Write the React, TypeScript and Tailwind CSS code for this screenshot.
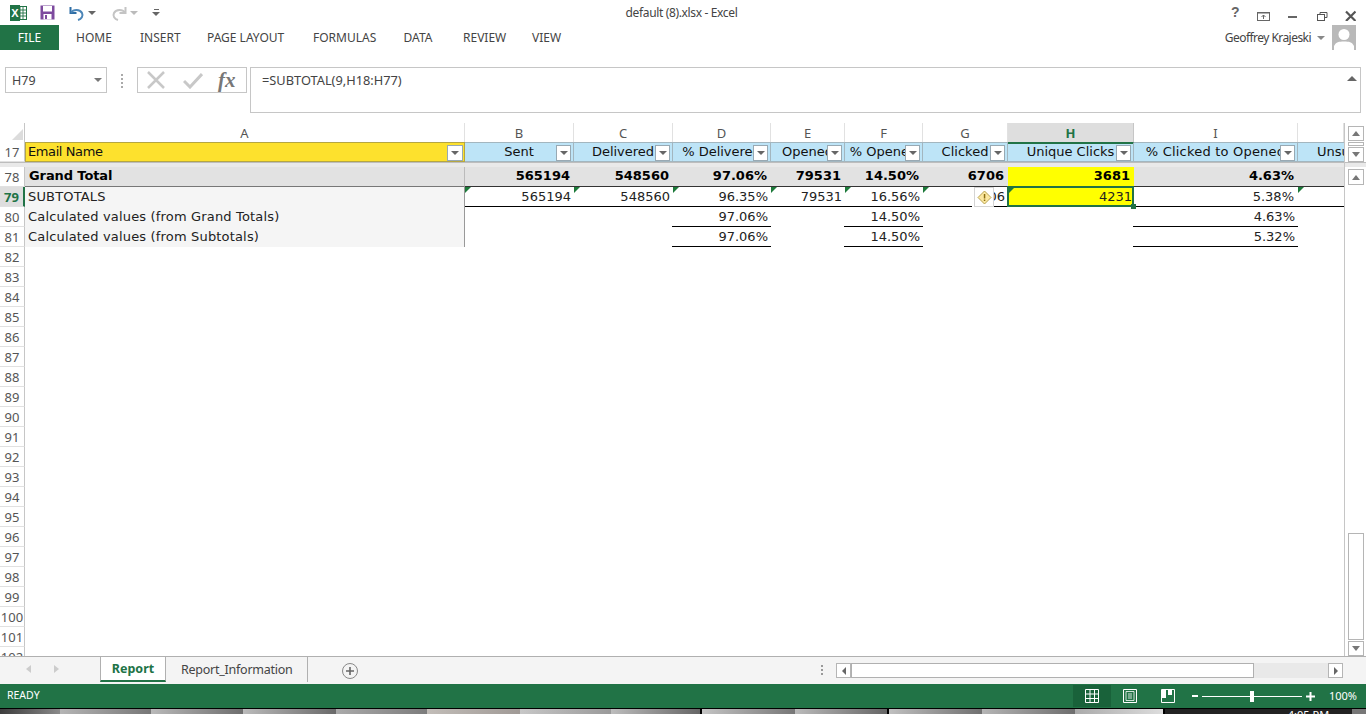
import { ReactNode } from "react";

const cols = "grid grid-cols-[25px_440px_109px_99px_98px_74px_78px_85px_126px_164px_46px]";
const ui = "font-['Noto_Sans',sans-serif]";
const cell = "font-['DejaVu_Sans',sans-serif] text-[13px]";

function Caret({ className = "" }: { className?: string }) {
  return <span className={`block w-0 h-0 border-x-[4px] border-x-transparent border-t-[4px] border-t-[#666] ${className}`} />;
}

function FilterButton() {
  return (
    <span className="absolute right-[2px] top-[2px] w-[15px] h-[16px] bg-white border border-[#98a9b3] flex items-center justify-center">
      <Caret />
    </span>
  );
}

function ScrollButton({ up, className = "" }: { up?: boolean; className?: string }) {
  return (
    <span className={`w-[16px] h-[15px] bg-white border border-[#b5b5b5] flex items-center justify-center shrink-0 ${className}`}>
      <span className={`block w-0 h-0 border-x-[4px] border-x-transparent ${up ? "border-b-[5px] border-b-[#777]" : "border-t-[5px] border-t-[#777]"}`} />
    </span>
  );
}

function Tri() {
  return <span className="absolute left-0 top-0 w-0 h-0 border-t-[6px] border-t-[#1d7a3a] border-r-[6px] border-r-transparent" />;
}

function RowHead({ n, active }: { n: number; active?: boolean }) {
  return (
    <div className={`h-[20px] pt-[2px] ${ui} text-[13px] flex items-center justify-center overflow-hidden border-b border-[#e1e1e1] border-r ${active ? "bg-[#dedede] text-[#217346] font-bold border-r-2 border-r-[#217346]" : "border-r-[#c6c6c6] text-[#555]"}`}>
      {n}
    </div>
  );
}

function ColHead({ label, active }: { label: string; active?: boolean }) {
  return (
    <div className={`${ui} text-[13px] h-[19px] pt-[2px] flex items-center justify-center border-r ${active ? "bg-[#dedede] text-[#217346] font-bold border-r-[#c6c6c6]" : "text-[#555] border-r-[#e1e1e1]"}`}>
      {label}
    </div>
  );
}

function HeadCell({ label, extra = "" }: { label: string; extra?: string }) {
  return (
    <div className={`relative h-[20px] bg-[#bde4f7] border-y border-r border-[#a3b6bf] ${cell} text-[#111] text-center leading-[17px] overflow-hidden whitespace-nowrap ${extra}`}>
      <span className="absolute left-1/2 -translate-x-1/2 top-0">{label}</span>
      <FilterButton />
    </div>
  );
}

function Num({ children, tri, line, className = "" }: { children?: ReactNode; tri?: boolean; line?: boolean; className?: string }) {
  return (
    <div className={`relative h-[20px] pr-[3px] text-right ${cell} text-[#222] leading-[19px] border-b ${line ? "border-b-black" : "border-b-transparent"} ${className}`}>
      {tri && <Tri />}
      {children}
    </div>
  );
}

function WarnBadge() {
  return (
    <span className="absolute left-[49px] top-0 w-[22px] h-[20px] bg-white flex justify-end">
      <span className="w-[20px] h-[20px] bg-white border border-[#d4d4d4] flex items-center justify-center">
        <svg width="15" height="15" viewBox="0 0 15 15">
          <path d="M7.5 1 14 7.5 7.5 14 1 7.5Z" fill="#fbe7a0" stroke="#b8a24e" />
          <rect x="6.8" y="4" width="1.5" height="4.5" fill="#8a6d10" />
          <rect x="6.8" y="9.5" width="1.5" height="1.5" fill="#8a6d10" />
        </svg>
      </span>
    </span>
  );
}

function TitleBar() {
  return (
    <div className={`h-[25px] flex items-center ${ui} text-[12px] text-[#444] shrink-0`}>
      <div className="w-[10px]" />
      <svg width="17" height="16" viewBox="0 0 17 16">
        <rect x="6" y="1.5" width="10.5" height="13" fill="#fff" stroke="#217346" />
        <path d="M10 2v12M13 2v12M7 5h9M7 8h9M7 11h9" stroke="#217346" strokeWidth="0.9" />
        <rect x="0" y="0" width="10" height="16" fill="#217346" />
        <text x="5" y="12" textAnchor="middle" fontSize="11" fontWeight="bold" fill="#fff" fontFamily="Liberation Sans">X</text>
      </svg>
      <svg className="ml-[13px]" width="15" height="15" viewBox="0 0 15 15">
        <rect x="0.5" y="0.5" width="14" height="14" fill="#7d4a9e" />
        <rect x="3" y="1" width="9" height="5.5" fill="#fff" />
        <rect x="3.5" y="9" width="8" height="5.5" fill="#fff" />
        <rect x="5" y="10" width="2" height="4" fill="#7d4a9e" />
      </svg>
      <svg className="ml-[14px]" width="16" height="16" viewBox="0 0 16 16">
        <path d="M1.5 2v6h6" fill="none" stroke="#2f6ea5" strokeWidth="2" />
        <path d="M2 7.500C4.500 4 11 4 13 8c1.500 3-.5 6-4 7" fill="none" stroke="#4c86b8" strokeWidth="2" />
      </svg>
      <Caret className="ml-[3px] border-t-[3px] border-x-[3px]" />
      <svg className="ml-[15px]" width="16" height="16" viewBox="0 0 16 16">
        <path d="M14.500 2v6h-6" fill="none" stroke="#c4c4c4" strokeWidth="2" />
        <path d="M14 7.500C11.500 4 5 4 3 8c-1.500 3 .5 6 4 7" fill="none" stroke="#c4c4c4" strokeWidth="2" />
      </svg>
      <Caret className="ml-[3px] border-t-[3px] border-x-[3px] border-t-[#bbb]" />
      <span className="ml-[14px] flex flex-col items-center gap-[2px]">
        <span className="block w-[5px] h-[1px] bg-[#666]" />
        <Caret className="border-t-[3px] border-x-[3px]" />
      </span>
      <div className="flex-1 text-center pr-[17px] tracking-[-0.35px]">default (8).xlsx - Excel</div>
      <svg width="136" height="16" viewBox="0 0 136 16" className="mr-[10px]">
        <text x="11" y="12" fontSize="14" fontWeight="bold" fill="#666" fontFamily="Liberation Sans">?</text>
        <rect x="37.500" y="7.500" width="12" height="8" fill="none" stroke="#666" />
        <path d="M37 8h13M43.500 14V10M41.500 12l2-2 2 2" stroke="#666" fill="none" />
        <rect x="68" y="11" width="9" height="2" fill="#666" />
        <rect x="97.500" y="9.500" width="7" height="6" fill="none" stroke="#555" />
        <path d="M100 9V7.500h7v5h-2" fill="none" stroke="#555" />
        <path d="M126 6.500l9.500 9.500M135.500 6.500 126 16" stroke="#555" strokeWidth="2.200" />
      </svg>
    </div>
  );
}

function RibbonTabs() {
  const tabs = [
    ["HOME", "w-[35px] ml-[17px]"],
    ["INSERT", "w-[38px] ml-[29px]"],
    ["PAGE LAYOUT", "w-[77px] ml-[29px]"],
    ["FORMULAS", "w-[61px] ml-[29px]"],
    ["DATA", "w-[30px] ml-[29px]"],
    ["REVIEW", "w-[39px] ml-[30px]"],
    ["VIEW", "w-[27px] ml-[30px]"],
  ];
  return (
    <div className={`h-[25px] flex items-center ${ui} text-[12px] text-[#444] shrink-0`}>
      <div className="w-[59px] h-[25px] bg-[#217346] text-white flex items-center justify-center">FILE</div>
      {tabs.map(([t, m]) => (
        <span key={t} className={`${m} text-center whitespace-nowrap`}>{t}</span>
      ))}
      <div className="flex-1" />
      <span className="text-[#444] tracking-[-0.55px]">Geoffrey Krajeski</span>
      <Caret className="ml-[6px] mr-[7px] border-t-[3px] border-x-[3px] border-t-[#888]" />
      <svg width="24" height="25" viewBox="0 0 24 25" className="mr-[10px]">
        <rect width="24" height="25" fill="#b9b9b9" />
        <circle cx="12" cy="9.500" r="5.500" fill="#fff" />
        <path d="M2 25v-4c2-4 5-4.500 10-4.500S20 17 22 21v4Z" fill="#fff" />
      </svg>
    </div>
  );
}

function FormulaBar() {
  return (
    <div className={`h-[73px] shrink-0 flex items-start pt-[17px] pl-[5px] pr-[5px] ${ui} text-[12.800px] text-[#444]`}>
      <div className="w-[102px] h-[26px] border border-[#c6c6c6] flex items-center pl-[6px] pr-[4px] justify-between pt-[2px]">
        <span className="text-[12.500px]">H79</span>
        <Caret className="border-t-[#777] -mt-[2px]" />
      </div>
      <div className="w-[30px] flex flex-col items-center gap-[2px] pt-[7px]">
        <span className="w-[2px] h-[2px] bg-[#aaa]" />
        <span className="w-[2px] h-[2px] bg-[#aaa]" />
        <span className="w-[2px] h-[2px] bg-[#aaa]" />
        <span className="w-[2px] h-[2px] bg-[#aaa]" />
      </div>
      <div className="w-[110px] h-[26px] border border-[#c6c6c6] flex items-center">
        <svg width="20" height="18" viewBox="0 0 20 18" className="ml-[8px]">
          <path d="M2 1l16 16M18 1 2 17" stroke="#c8c8c8" strokeWidth="2.500" />
        </svg>
        <svg width="20" height="18" viewBox="0 0 20 18" className="ml-[17px]">
          <path d="M1 10l6 6L19 3" fill="none" stroke="#c8c8c8" strokeWidth="3" />
        </svg>
        <span className="ml-[15px] font-['Liberation_Serif',serif] italic font-bold text-[21px] leading-none text-[#777]">fx</span>
      </div>
      <div className="ml-[3px] flex-1 h-[46px] border border-[#c6c6c6] relative pl-[11px] pt-[3px]">
        =SUBTOTAL(9,H18:H77)
        <span className="absolute right-[3px] top-[8px] block w-0 h-0 border-x-[5px] border-x-transparent border-b-[5px] border-b-[#666]" />
      </div>
    </div>
  );
}

function Sheet() {
  const rest = Array.from({ length: 20 }, (_, i) => 82 + i);
  const labelCell = `h-[20px] bg-[#f5f5f5] border-r border-[#999] pl-[3px] ${cell} text-[#222] leading-[19px] tracking-[0.17px]`;
  const boldCell = `h-[20px] border-b border-b-[#333] pr-[4px] text-right ${cell} font-bold text-black leading-[18px]`;
  return (
    <div className="flex-1 flex min-h-0">
      <div className="w-[1344px] flex flex-col">
        <div className={cols}>
          <div className="h-[19px] border-r border-[#c6c6c6] relative">
            <span className="absolute right-[1px] bottom-[2px] w-0 h-0 border-b-[11px] border-b-[#dcdcdc] border-l-[11px] border-l-transparent" />
          </div>
          {["A", "B", "C", "D", "E", "F", "G"].map((c) => (
            <ColHead key={c} label={c} />
          ))}
          <ColHead label="H" active />
          <ColHead label="I" />
          <ColHead label="" />
        </div>
        <div className={cols}>
          <RowHead n={17} />
          <div className={`relative h-[20px] bg-[#fde12d] border border-[#b5a642] pl-[2px] ${cell} text-[#111] leading-[17px] tracking-[-0.4px]`}>
            Email Name
            <span className="absolute right-[1px] top-[2px] w-[16px] h-[16px] bg-white border border-[#98a9b3] flex items-center justify-center">
              <Caret />
            </span>
          </div>
          <HeadCell label="Sent" />
          <HeadCell label="Delivered" />
          <HeadCell label="% Delivered" />
          <HeadCell label="Opened" />
          <HeadCell label="% Opened" />
          <HeadCell label="Clicked" />
          <HeadCell label="Unique Clicks" extra="border-t-[#217346] shadow-[inset_0_1px_0_#217346]" />
          <HeadCell label="% Clicked to Opened" extra="tracking-[0.2px]" />
          <div className={`h-[20px] bg-[#bde4f7] border-y border-[#a3b6bf] ${cell} text-[#111] pl-[19px] leading-[17px] overflow-hidden whitespace-nowrap`}>
            Unsubscribes
          </div>
        </div>
        <div className="h-[5px] bg-[#e9e9e9] border-t border-[#bdbdbd]" />

        <div className="flex-1 min-h-0 overflow-hidden">
          <div className={cols}>
            <RowHead n={78} />
            <div className={`h-[20px] bg-[#e2e2e2] border-b border-b-[#777] border-r border-r-[#bbb] pl-[4px] tracking-[-0.1px] ${cell} font-bold text-black leading-[18px]`}>Grand Total</div>
            {["565194", "548560", "97.06%", "79531", "14.50%", "6706"].map((v, i) => (
              <div key={i} className={`bg-[#e2e2e2] ${boldCell}`}>{v}</div>
            ))}
            <div className={`bg-[#ffff00] ${boldCell}`}>3681</div>
            <div className={`bg-[#e2e2e2] ${boldCell}`}>4.63%</div>
            <div className={`bg-[#e2e2e2] ${boldCell}`} />
          </div>

          <div className={cols}>
            <RowHead n={79} active />
            <div className={labelCell}>SUBTOTALS</div>
            <Num tri line>565194</Num>
            <Num tri line>548560</Num>
            <Num tri line>96.35%</Num>
            <Num tri line>79531</Num>
            <Num tri line>16.56%</Num>
            <Num tri line>
              6706
              <WarnBadge />
            </Num>
            <div className={`relative z-10 -mt-[1px] -ml-[1px] h-[21px] bg-[#ffff00] border-2 border-[#217346] text-right ${cell} text-[#222] leading-[18px]`}>
              <span className="absolute left-0 top-0 w-0 h-0 border-t-[5px] border-t-[#1d7a3a] border-r-[5px] border-r-transparent" />
              4231
              <span className="absolute right-[-4px] bottom-[-4px] w-[5px] h-[5px] bg-[#217346]" />
            </div>
            <Num line className="pr-[4px]">5.38%</Num>
            <Num line tri />
          </div>

          <div className={cols}>
            <RowHead n={80} />
            <div className={labelCell}>Calculated values (from Grand Totals)</div>
            <Num />
            <Num />
            <Num line className="-ml-[1px]">97.06%</Num>
            <Num />
            <Num line className="-ml-[1px]">14.50%</Num>
            <Num />
            <Num />
            <Num line className="-ml-[1px]">4.63%</Num>
            <Num />
          </div>

          <div className={cols}>
            <RowHead n={81} />
            <div className={labelCell}>Calculated values (from Subtotals)</div>
            <Num />
            <Num />
            <Num line className="-ml-[1px]">97.06%</Num>
            <Num />
            <Num line className="-ml-[1px]">14.50%</Num>
            <Num />
            <Num />
            <Num line className="-ml-[1px]">5.32%</Num>
            <Num />
          </div>

          {rest.map((n) => (
            <div key={n} className={cols}>
              <RowHead n={n} />
            </div>
          ))}
          <div className={cols}>
            <RowHead n={102} />
          </div>
        </div>
      </div>

      <div className="flex-1 flex flex-col border-l border-[#c6c6c6]">
        <div className="h-[39px] flex flex-col pt-[3px] gap-[1px] pl-[3px]">
          <ScrollButton up className="h-[14px]" />
          <span className="w-[16px] h-[6px] border border-[#b5b5b5] bg-white" />
          <ScrollButton className="h-[14px]" />
        </div>
        <div className="h-[5px] bg-[#e9e9e9] border-t border-[#bdbdbd]" />
        <div className="flex-1 flex flex-col pt-[2px] pl-[3px]">
          <ScrollButton up className="h-[16px]" />
          <div className="flex-1 bg-white" />
          <span className="w-[16px] h-[107px] bg-white border border-[#b5b5b5]" />
          <ScrollButton className="h-[14px] mt-[1px]" />
        </div>
      </div>
    </div>
  );
}

function SheetTabs() {
  return (
    <div className={`h-[28px] shrink-0 bg-[#f4f4f4] border-t border-[#b0b0b0] flex items-start ${ui} text-[12.500px] text-[#444] relative`}>
      <span className="ml-[26px] mt-[8px] block w-0 h-0 border-y-[4px] border-y-transparent border-r-[5px] border-r-[#ccc]" />
      <span className="ml-[23px] mt-[8px] block w-0 h-0 border-y-[4px] border-y-transparent border-l-[5px] border-l-[#ccc]" />
      <div className="ml-[41px] -mt-[1px] pt-[2px] w-[66px] h-[26px] bg-white border-x border-t border-[#b0b0b0] border-b-2 border-b-[#217346] text-[#217346] font-bold flex items-center justify-center">
        Report
      </div>
      <div className="w-[142px] h-[25px] flex items-center pl-[15px] pt-[1px] border-r border-[#b0b0b0]">
        <span className="tracking-[-0.25px]">Report_Information</span>
      </div>
      <svg width="18" height="18" viewBox="0 0 18 18" className="ml-[33px] mt-[5px]">
        <circle cx="9" cy="9" r="7.500" fill="none" stroke="#888" />
        <path d="M5 9h8M9 5v8" stroke="#666" strokeWidth="1.600" />
      </svg>
      <div className="flex-1" />
      <span className="mt-[8px] mr-[13px] flex flex-col gap-[2px]">
        <span className="w-[2px] h-[2px] bg-[#999]" />
        <span className="w-[2px] h-[2px] bg-[#999]" />
        <span className="w-[2px] h-[2px] bg-[#999]" />
      </span>
      <div className="mt-[6px] w-[507px] h-[15px] flex mr-[23px]">
        <span className="w-[15px] h-[15px] bg-white border border-[#b5b5b5] flex items-center justify-center">
          <span className="block w-0 h-0 border-y-[4px] border-y-transparent border-r-[4px] border-r-[#666]" />
        </span>
        <span className="w-[403px] h-[15px] bg-white border border-[#b0b0b0]" />
        <span className="flex-1 bg-[#e9e9e9]" />
        <span className="w-[15px] h-[15px] bg-white border border-[#b5b5b5] flex items-center justify-center">
          <span className="block w-0 h-0 border-y-[4px] border-y-transparent border-l-[4px] border-l-[#666]" />
        </span>
      </div>
    </div>
  );
}

function StatusBar() {
  return (
    <div className={`h-[24px] shrink-0 bg-[#217346] text-white flex items-center ${ui} text-[10.500px]`}>
      <span className="ml-[7px]">READY</span>
      <div className="flex-1" />
      <div className="w-[38px] h-[22px] bg-[#19623a] flex items-center justify-center">
        <svg width="14" height="14" viewBox="0 0 14 14">
          <path d="M.5.5h13v13H.5ZM.5 5h13M.5 9.500h13M5 .5v13M9.500.5v13" fill="none" stroke="#fff" />
        </svg>
      </div>
      <svg width="14" height="14" viewBox="0 0 14 14" className="ml-[12px]">
        <path d="M.5.5h13v13H.5Z" fill="none" stroke="#fff" />
        <path d="M3 2.500h8v9H3ZM5 5h4M5 7h4M5 9h4" fill="none" stroke="#fff" strokeWidth="0.800" />
      </svg>
      <svg width="14" height="14" viewBox="0 0 14 14" className="ml-[24px]">
        <path d="M.5.5h13v13H.5Z" fill="none" stroke="#fff" />
        <path d="M1 1h4v8H1ZM7 1h4v5H7Z" fill="#fff" />
      </svg>
      <span className="ml-[17px] w-[6px] h-[2px] bg-white" />
      <div className="ml-[4px] w-[100px] h-[1px] bg-white relative">
        <span className="absolute left-[48px] top-[-5px] w-[4px] h-[11px] bg-white" />
      </div>
      <svg width="9" height="9" viewBox="0 0 9 9" className="ml-[4px]">
        <path d="M0 4.500h9M4.500 0v9" stroke="#fff" strokeWidth="2" />
      </svg>
      <span className="ml-[14px] mr-[9px] text-[11px]">100%</span>
    </div>
  );
}

function Taskbar() {
  const segs = [
    "w-[60px] bg-gradient-to-r from-[#3d3d3d] to-[#8a8a8a]",
    "w-[91px] bg-gradient-to-r from-[#b5b5b5] to-[#777]",
    "w-[92px] bg-gradient-to-r from-[#b9b9b9] to-[#6e6e6e]",
    "w-[93px] bg-gradient-to-r from-[#bbb] to-[#6a6a6a]",
    "w-[91px] bg-gradient-to-r from-[#aaa] to-[#7c7c7c]",
    "w-[93px] bg-gradient-to-r from-[#c2bdb8] to-[#a09a96]",
    "w-[91px] bg-gradient-to-r from-[#c7c7c7] to-[#9a9a9a]",
    "w-[91px] bg-gradient-to-r from-[#bdbdbd] to-[#666] border-r-2 border-black",
    "w-[93px] bg-gradient-to-r from-[#c4c4c4] to-[#777]",
    "w-[94px] bg-gradient-to-r from-[#bbb] to-[#666] border-r-2 border-black",
    "w-[93px] bg-gradient-to-r from-[#c0c0c0] to-[#707070]",
    "w-[93px] bg-gradient-to-r from-[#b5b5b5] to-[#6e6e6e]",
    "w-[90px] bg-gradient-to-r from-[#aaa] to-[#ddd] border-r-2 border-black",
  ];
  return (
    <div className="h-[6px] shrink-0 flex border-t border-black overflow-hidden bg-[#222]">
      {segs.map((s, i) => (
        <span key={i} className={`h-full shrink-0 ${s}`} />
      ))}
      <span className={`flex-1 ${ui} text-[11px] text-white text-center leading-[14px] -mt-[1px] pl-[100px] whitespace-nowrap`}>4:05 PM</span>
      <span className="w-[14px] h-full shrink-0 bg-[#777]" />
    </div>
  );
}

export default function App() {
  return (
    <div className="w-[1366px] h-[714px] bg-white flex flex-col overflow-hidden">
      <TitleBar />
      <RibbonTabs />
      <FormulaBar />
      <Sheet />
      <SheetTabs />
      <StatusBar />
      <Taskbar />
    </div>
  );
}
